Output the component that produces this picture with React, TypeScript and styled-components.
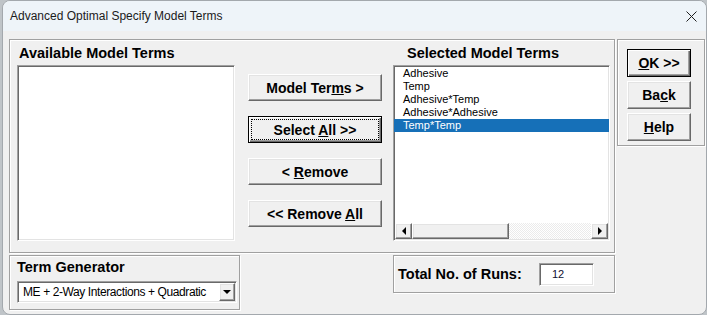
import * as React from 'react';
import styled, { createGlobalStyle, css } from 'styled-components';

const GlobalStyle = createGlobalStyle`
  html, body {
    margin: 0;
    padding: 0;
    background: #bfc4c8;
  }
  body {
    font-family: "Liberation Sans", Arial, sans-serif;
  }
`;

const raised = css`
  border: 1px solid;
  border-color: #fff #696969 #696969 #fff;
  box-shadow: inset -1px -1px 0 #a0a0a0, inset 1px 1px 0 #e3e3e3;
`;

const sunken = css`
  border: 1px solid;
  border-color: #a0a0a0 #fff #fff #a0a0a0;
  box-shadow: inset 1px 1px 0 #696969, inset -1px -1px 0 #e3e3e3;
`;

const etched = css`
  box-sizing: border-box;
  border: 1px solid #a0a0a0;
  box-shadow: inset 1px 1px 0 #fff, 1px 1px 0 #fff;
`;

const Window = styled.div`
  box-sizing: border-box;
  width: 705px;
  height: 315px;
  margin-left: 2px;
  border: 1px solid #a3a8ad;
  border-radius: 8px;
  overflow: hidden;
  background: #f0f0f0;
  display: flex;
  flex-direction: column;
`;

const TitleBar = styled.div`
  height: 30px;
  flex: 0 0 30px;
  display: flex;
  align-items: center;
  padding-left: 7px;
  background: #eef4f9;
`;

const Title = styled.div`
  font-size: 12px;
  color: #1b1b1b;
`;

const CloseBox = styled.div`
  margin-left: auto;
  width: 30px;
  height: 30px;
  display: flex;
  align-items: center;
  justify-content: center;
`;

const Body = styled.div`
  flex: 1;
  display: flex;
  flex-direction: column;
  padding: 8px 0 0 6px;
`;

const TopRow = styled.div`
  display: flex;
  align-items: flex-start;
  gap: 2px;
`;

const BottomRow = styled.div`
  display: flex;
  align-items: flex-start;
  margin-top: 2px;
`;

const MainFrame = styled.div`
  ${etched};
  width: 606px;
  height: 214px;
  display: flex;
  padding-left: 7px;
`;

const SideFrame = styled.div`
  ${etched};
  width: 88px;
  height: 107px;
  display: flex;
  flex-direction: column;
  gap: 4px;
  padding: 9px 0 0 9px;
`;

const Column = styled.div<{ $width: number; $offset?: number }>`
  width: ${({ $width }) => $width}px;
  margin-left: ${({ $offset = 0 }) => $offset}px;
  display: flex;
  flex-direction: column;
`;

const GroupLabel = styled.div<{ $indent?: number }>`
  box-sizing: border-box;
  height: 25px;
  padding: 5px 0 0 ${({ $indent = 0 }) => $indent}px;
  font-size: 14.5px;
  font-weight: bold;
  line-height: 17px;
  color: #000;
  white-space: nowrap;
`;

const ListBox = styled.div`
  ${sunken};
  box-sizing: border-box;
  height: 176px;
  padding: 1px 0;
  background: #fff;
  display: flex;
  flex-direction: column;
`;

const ListItems = styled.div`
  flex: 1;
`;

const ListItem = styled.div<{ $selected?: boolean }>`
  height: 13px;
  line-height: 13px;
  padding-left: 9px;
  font-size: 11px;
  white-space: nowrap;
  color: ${({ $selected }) => ($selected ? '#fff' : '#000')};
  background: ${({ $selected }) => ($selected ? '#1670b8' : 'transparent')};
`;

const ScrollBar = styled.div`
  height: 16px;
  display: flex;
  margin: 0 1px;
`;

const ScrollButton = styled.div`
  ${raised};
  box-sizing: border-box;
  width: 17px;
  height: 16px;
  background: #f0f0f0;
  display: flex;
  align-items: center;
  justify-content: center;
`;

const Thumb = styled.div`
  ${raised};
  box-sizing: border-box;
  width: 97px;
  height: 16px;
  background: #f0f0f0;
`;

const Track = styled.div`
  flex: 1;
  background: repeating-conic-gradient(#fff 0% 25%, #ebebeb 0% 50%) 0 0 / 2px 2px;
`;

const Arrow = styled.span<{ $dir: 'left' | 'right' | 'down' }>`
  width: 0;
  height: 0;
  ${({ $dir }) =>
    $dir === 'left'
      ? 'border-top: 4px solid transparent; border-bottom: 4px solid transparent; border-right: 4px solid #000;'
      : $dir === 'right'
        ? 'border-top: 4px solid transparent; border-bottom: 4px solid transparent; border-left: 4px solid #000;'
        : 'border-left: 4px solid transparent; border-right: 4px solid transparent; border-top: 4px solid #000;'}
`;

const ButtonColumn = styled.div`
  width: 134px;
  margin-left: 13px;
  padding-top: 34px;
  display: flex;
  flex-direction: column;
  gap: 15px;
`;

const Button = styled.button<{ $default?: boolean; $w: number; $h: number }>`
  box-sizing: border-box;
  width: ${({ $w }) => $w}px;
  height: ${({ $h }) => $h}px;
  padding: 2px;
  margin: 0;
  background: #f0f0f0;
  font-family: "Liberation Sans", Arial, sans-serif;
  font-size: 14px;
  font-weight: bold;
  color: #000;
  display: flex;
  align-items: stretch;
  ${({ $default }) =>
    $default
      ? css`
          border: 1px solid #000;
          box-shadow: inset 1px 1px 0 #fff, inset -1px -1px 0 #696969, inset -2px -2px 0 #a0a0a0;
        `
      : raised}
`;

const Face = styled.span<{ $focus?: boolean }>`
  flex: 1;
  display: flex;
  align-items: center;
  justify-content: center;
  white-space: pre;
  border: 1px ${({ $focus }) => ($focus ? 'dotted #000' : 'solid transparent')};
`;

const TermFrame = styled.div`
  ${etched};
  width: 231px;
  height: 55px;
  padding: 3px 0 0 7px;
  display: flex;
  flex-direction: column;
`;

const SmallLabel = styled.div`
  font-size: 14.5px;
  font-weight: bold;
  line-height: 17px;
  white-space: nowrap;
`;

const Dropdown = styled.div`
  ${sunken};
  box-sizing: border-box;
  width: 220px;
  height: 22px;
  margin-top: 5px;
  background: #fff;
  display: flex;
  align-items: stretch;
  padding: 1px;
`;

const DropText = styled.div`
  flex: 1;
  padding-left: 4px;
  font-size: 12px;
  letter-spacing: -0.4px;
  line-height: 18px;
  white-space: nowrap;
`;

const DropButton = styled.div`
  ${raised};
  box-sizing: border-box;
  width: 16px;
  background: #f0f0f0;
  display: flex;
  align-items: center;
  justify-content: center;
`;

const RunsFrame = styled.div`
  ${etched};
  width: 222px;
  height: 38px;
  margin-left: 153px;
  padding-left: 4px;
  display: flex;
  align-items: center;
`;

const RunsLabel = styled(SmallLabel)`
  flex: 0 0 141px;
`;

const RunsInput = styled.div`
  ${sunken};
  box-sizing: border-box;
  width: 55px;
  height: 23px;
  padding-left: 12px;
  background: #fff;
  font-size: 11px;
  line-height: 21px;
  color: #101030;
`;

const selected = ['Adhesive', 'Temp', 'Adhesive*Temp', 'Adhesive*Adhesive', 'Temp*Temp'];

export default function App() {
  return (
    <>
      <GlobalStyle />
      <Window>
        <TitleBar>
          <Title>Advanced Optimal Specify Model Terms</Title>
          <CloseBox>
            <svg width="11" height="11" viewBox="0 0 11 11">
              <path d="M0.5 0.5 L10.5 10.5 M10.5 0.5 L0.5 10.5" stroke="#1f1f1f" strokeWidth="1" />
            </svg>
          </CloseBox>
        </TitleBar>
        <Body>
          <TopRow>
            <MainFrame>
              <Column $width={218}>
                <GroupLabel $indent={2}>Available Model Terms</GroupLabel>
                <ListBox />
              </Column>
              <ButtonColumn>
                <Button $w={134} $h={27}>
                  <Face><span>Model Ter<u>m</u>s &gt;</span></Face>
                </Button>
                <Button $w={134} $h={27} $default>
                  <Face $focus><span>Select <u>A</u>ll &gt;&gt;</span></Face>
                </Button>
                <Button $w={134} $h={27}>
                  <Face><span>&lt; <u>R</u>emove</span></Face>
                </Button>
                <Button $w={134} $h={27}>
                  <Face><span>&lt;&lt; Remove <u>A</u>ll</span></Face>
                </Button>
              </ButtonColumn>
              <Column $width={217} $offset={11}>
                <GroupLabel $indent={14}>Selected Model Terms</GroupLabel>
                <ListBox>
                  <ListItems>
                    {selected.map((t, i) => (
                      <ListItem key={t} $selected={i === selected.length - 1}>
                        {t}
                      </ListItem>
                    ))}
                  </ListItems>
                  <ScrollBar>
                    <ScrollButton>
                      <Arrow $dir="left" />
                    </ScrollButton>
                    <Thumb />
                    <Track />
                    <ScrollButton>
                      <Arrow $dir="right" />
                    </ScrollButton>
                  </ScrollBar>
                </ListBox>
              </Column>
            </MainFrame>
            <SideFrame>
              <Button $w={64} $h={28} $default>
                <Face><span><u>O</u>K &gt;&gt;</span></Face>
              </Button>
              <Button $w={64} $h={28}>
                <Face><span>Ba<u>c</u>k</span></Face>
              </Button>
              <Button $w={64} $h={28}>
                <Face><span><u>H</u>elp</span></Face>
              </Button>
            </SideFrame>
          </TopRow>
          <BottomRow>
            <TermFrame>
              <SmallLabel>Term Generator</SmallLabel>
              <Dropdown>
                <DropText>ME + 2-Way Interactions + Quadratic</DropText>
                <DropButton>
                  <Arrow $dir="down" />
                </DropButton>
              </Dropdown>
            </TermFrame>
            <RunsFrame>
              <RunsLabel>Total No. of Runs:</RunsLabel>
              <RunsInput>12</RunsInput>
            </RunsFrame>
          </BottomRow>
        </Body>
      </Window>
    </>
  );
}
